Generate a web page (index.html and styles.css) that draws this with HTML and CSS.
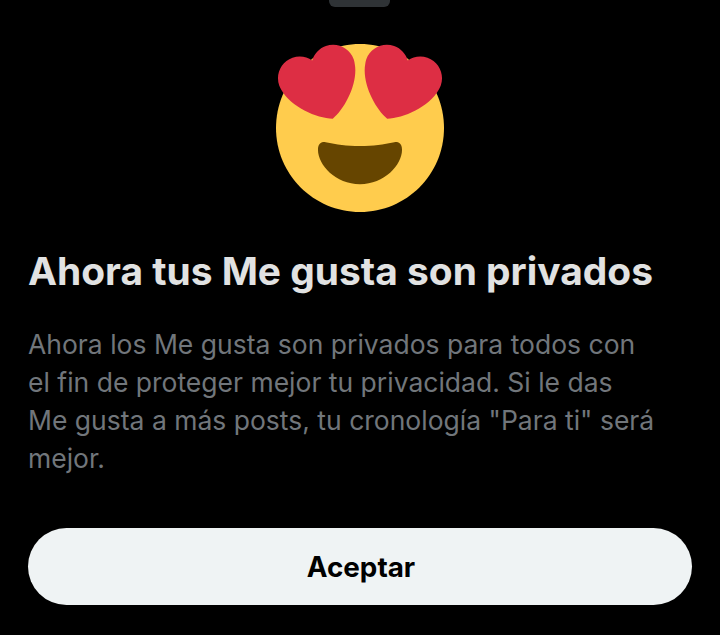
FILE: index.html
```html
<!DOCTYPE html>
<html lang="es">
<head>
<meta charset="utf-8">
<title>Ahora tus Me gusta son privados</title>
<link rel="stylesheet" href="styles.css">
</head>
<body>
<main class="sheet">
  <div class="handle"></div>
  <svg class="emoji" viewBox="0 0 36 36" aria-hidden="true">
    <path fill="#FFCC4D" d="M36 18c0 9.941-8.059 18-18 18-9.94 0-18-8.059-18-18C0 8.06 8.06 0 18 0c9.941 0 18 8.06 18 18"/>
    <path fill="#664500" d="M18 21.849c-2.966 0-4.935-.346-7.369-.819-.557-.106-1.638 0-1.638 1.638 0 3.276 3.763 7.37 9.007 7.37 5.243 0 9.006-4.094 9.006-7.37 0-1.638-1.082-1.745-1.637-1.638-2.434.473-4.402.819-7.369.819"/>
    <path fill="#DD2E44" d="M16.65 3.281C15.791.85 13.126-.426 10.694.431c-1.476.52-2.521 1.711-2.928 3.104-1.191-.829-2.751-1.1-4.225-.58C1.111 3.813-.167 6.48.692 8.911c.122.344.284.663.472.958 1.951 3.582 7.588 6.1 11.001 6.131 2.637-2.167 5.446-7.665 4.718-11.677-.038-.348-.113-.698-.233-1.042zm2.7 0C20.209.85 22.875-.426 25.306.431c1.476.52 2.521 1.711 2.929 3.104 1.191-.829 2.751-1.1 4.225-.58 2.43.858 3.707 3.525 2.85 5.956-.123.344-.284.663-.473.958-1.951 3.582-7.588 6.1-11.002 6.131-2.637-2.167-5.445-7.665-4.717-11.677.037-.348.112-.698.232-1.042z"/>
  </svg>
  <h1 class="title">Ahora tus Me gusta son privados</h1>
  <p class="body">Ahora los Me gusta son privados para todos con<br>el fin de proteger mejor tu privacidad. Si le das<br>Me gusta a más posts, tu cronología "Para ti" será<br>mejor.</p>
  <button class="accept">Aceptar</button>
</main>
</body>
</html>
```
FILE: styles.css
```css
html, body {
  margin: 0;
  height: 100%;
  background: #000;
}
.sheet {
  box-sizing: border-box;
  height: 635px;
  overflow: hidden;
  padding: 0 28px;
  display: flex;
  flex-direction: column;
  font-family: Inter, "Liberation Sans", sans-serif;
}
.handle {
  align-self: center;
  width: 61px;
  height: 7px;
  margin-left: -1px;
  border-radius: 0 0 6px 6px;
  background: #2f3336;
  flex: none;
}
.emoji {
  align-self: center;
  display: block;
  width: 168px;
  height: 168px;
  margin-top: 37px;
  flex: none;
}
.title {
  margin: 35px 0 0;
  font-size: 38.9px;
  line-height: 48px;
  font-weight: 700;
  color: #e1e2e2;
  white-space: nowrap;
}
.body {
  margin: 30px 0 0;
  font-size: 26.5px;
  line-height: 38px;
  font-weight: 400;
  color: #71767b;
  white-space: nowrap;
}
.accept {
  display: block;
  width: 664px;
  height: 77px;
  margin: 51px 0 0;
  padding: 2px 0 0 2px;
  border: 0;
  border-radius: 39px;
  background: #eff3f4;
  color: #000;
  font: 700 27.8px/1 Inter, "Liberation Sans", sans-serif;
  flex: none;
}
```
